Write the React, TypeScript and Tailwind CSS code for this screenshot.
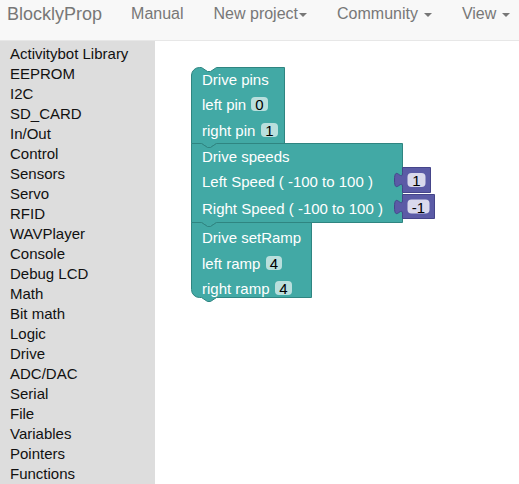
import React from 'react';

const categories = [
  'Activitybot Library',
  'EEPROM',
  'I2C',
  'SD_CARD',
  'In/Out',
  'Control',
  'Sensors',
  'Servo',
  'RFID',
  'WAVPlayer',
  'Console',
  'Debug LCD',
  'Math',
  'Bit math',
  'Logic',
  'Drive',
  'ADC/DAC',
  'Serial',
  'File',
  'Variables',
  'Pointers',
  'Functions',
];

const TEAL = '#42a9a5';
const TEAL_EDGE = '#2f8581';
const PURPLE = '#5b5ba6';
const PURPLE_EDGE = '#45458a';

function Caret({ spaced }: { spaced?: boolean }) {
  return (
    <span
      className={`inline-block w-0 h-0 border-t-[4px] border-t-[#777] border-x-[4px] border-x-transparent align-middle ${
        spaced ? 'ml-[6px]' : 'ml-[1px]'
      }`}
    />
  );
}

function Navbar() {
  return (
    <nav className="h-[41px] shrink-0 bg-[#f8f8f8] border-b border-[#e7e7e7] flex items-start pt-[3px] text-[#777]">
      <span className="ml-[7px] text-[18px] leading-[22px]">BlocklyProp</span>
      <div className="flex ml-[29px] gap-[30px] text-[16px] leading-[22px]">
        <span>Manual</span>
        <span>
          New project
          <Caret />
        </span>
        <span>
          Community
          <Caret spaced />
        </span>
        <span>
          View
          <Caret spaced />
        </span>
      </div>
    </nav>
  );
}

function Field({ x, y, w, label, fill }: { x: number; y: number; w: number; label: string; fill: string }) {
  return (
    <g>
      <rect x={x} y={y} width={w} height={14} rx={4} fill={fill} />
      <text x={x + w / 2} y={y + 7.5} textAnchor="middle" dominantBaseline="central" fill="#000">
        {label}
      </text>
    </g>
  );
}

function Label({ x, y, children }: { x: number; y: number; children: React.ReactNode }) {
  return (
    <text x={x} y={y} dominantBaseline="central" fill="#fff">
      {children}
    </text>
  );
}

// output block plugged into a value input (tab pokes left into the parent)
function ValueBlock({ x, y, w, h, label }: { x: number; y: number; w: number; h: number; label: string }) {
  const d = `M${x},${y} V${y + 5} c0,10 -8,-8 -8,7.5 s8,-2.5 8,7.5 V${y + h} H${x + w} V${y} Z`;
  return (
    <g>
      <path d={d} fill={PURPLE} stroke={PURPLE_EDGE} strokeWidth={1} />
      <Field x={x + 5} y={y + (h - 14) / 2} w={w - 10} label={label} fill="#d9d9ec" />
    </g>
  );
}

function Workspace() {
  const fieldFill = '#b9dfdd';
  // page coordinates: workspace starts at (155, 41)
  return (
    <svg
      width={364}
      height={443}
      viewBox="155 41 364 443"
      className="block font-['Liberation_Sans',Arial,sans-serif] text-[15px]"
    >
      {/* Drive pins */}
      <path
        d="M191.5,75 A8,8 0 0 1 199.5,67.5 H201.5 l6,4 3,0 6,-4 H284.5 V143.5 H216.5 l-6,4 -3,0 -6,-4 H191.5 Z"
        fill={TEAL}
        stroke={TEAL_EDGE}
        strokeWidth={1}
      />
      <Label x={202} y={79}>Drive pins</Label>
      <Label x={202} y={104}>left pin</Label>
      <Field x={251} y={97} w={17} label="0" fill={fieldFill} />
      <Label x={202} y={130}>right pin</Label>
      <Field x={261} y={123} w={17} label="1" fill={fieldFill} />

      {/* Drive speeds */}
      <path
        d="M191.5,143.5 H201.5 l6,4 3,0 6,-4 H402.5 V222.5 H216.5 l-6,4 -3,0 -6,-4 H191.5 Z"
        fill={TEAL}
        stroke={TEAL_EDGE}
        strokeWidth={1}
      />
      <Label x={202} y={156}>Drive speeds</Label>
      <Label x={202} y={181}>Left Speed ( -100 to 100 )</Label>
      <Label x={202} y={208}>Right Speed ( -100 to 100 )</Label>
      <ValueBlock x={402.5} y={167.5} w={28} h={25} label="1" />
      <ValueBlock x={402.5} y={194.5} w={32} h={24} label="-1" />

      {/* Drive setRamp */}
      <path
        d="M191.5,222.5 H201.5 l6,4 3,0 6,-4 H311.5 V297.5 H216.5 l-6,4 -3,0 -6,-4 H199.5 A8,8 0 0 1 191.5,289.5 Z"
        fill={TEAL}
        stroke={TEAL_EDGE}
        strokeWidth={1}
      />
      <Label x={202} y={237}>Drive setRamp</Label>
      <Label x={202} y={263}>left ramp</Label>
      <Field x={266} y={256} w={16} label="4" fill={fieldFill} />
      <Label x={202} y={288}>right ramp</Label>
      <Field x={275} y={281} w={17} label="4" fill={fieldFill} />
    </svg>
  );
}

export default function App() {
  return (
    <div className="w-[519px] h-[484px] overflow-hidden flex flex-col bg-white font-['Liberation_Sans',Arial,sans-serif]">
      <Navbar />
      <div className="flex flex-1 min-h-0">
        <aside className="w-[155px] shrink-0 bg-[#dddddd] pt-[3px] pl-[10px] text-[15px] leading-[20px] text-[#111]">
          {categories.map((c) => (
            <div key={c}>{c}</div>
          ))}
        </aside>
        <main className="flex-1 bg-white">
          <Workspace />
        </main>
      </div>
    </div>
  );
}
